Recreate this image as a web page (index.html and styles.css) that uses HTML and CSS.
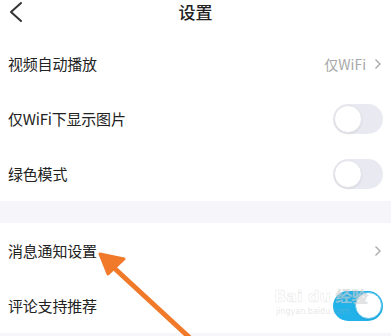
FILE: index.html
```html
<!DOCTYPE html>
<html lang="zh">
<head>
<meta charset="utf-8">
<link rel="stylesheet" href="styles.css">
</head>
<body>
<div class="page">
  <header class="topbar">
    <svg class="back" width="16" height="22" viewBox="0 0 16 22"><path d="M13 2 L3 11 L13 20" fill="none" stroke="#333" stroke-width="2" stroke-linecap="round" stroke-linejoin="round"/></svg>
    <div class="title">设置</div>
  </header>
  <section class="group">
    <div class="row"><span class="label">视频自动播放</span><span class="value">仅WiFi<svg class="chev" width="8" height="12" viewBox="0 0 8 12"><path d="M1.5 1.5 L6 6 L1.5 10.5" fill="none" stroke="#aaa" stroke-width="1.4"/></svg></span></div>
    <div class="row"><span class="label">仅WiFi下显示图片</span><span class="switch"><span class="knob"></span></span></div>
    <div class="row"><span class="label">绿色模式</span><span class="switch"><span class="knob"></span></span></div>
  </section>
  <div class="band"></div>
  <section class="group">
    <div class="row"><span class="label">消息通知设置</span><span class="value"><svg class="chev" width="8" height="12" viewBox="0 0 8 12"><path d="M1.5 1.5 L6 6 L1.5 10.5" fill="none" stroke="#aaa" stroke-width="1.4"/></svg></span></div>
    <div class="row"><span class="label">评论支持推荐</span><span class="switch on"><span class="knob"></span></span></div>
  </section>
  <div class="band bottom"></div>
  <div class="watermark"><span class="wm-big">Bai du 经验</span><span class="wm-small">jingyan.baidu.com</span></div>
  <svg class="arrow" width="391" height="336" viewBox="0 0 391 336"><defs><filter id="b"><feGaussianBlur stdDeviation="0.6"/></filter></defs><g filter="url(#b)"><path d="M190 338 L112 266" stroke="#f07a2a" stroke-width="5" stroke-linecap="round"/><path d="M100 254 L124 259 L108 274 Z" fill="#f07a2a" stroke="#f07a2a" stroke-width="3" stroke-linejoin="round"/></g></svg>
</div>
</body>
</html>
```
FILE: styles.css
```css
html, body { margin: 0; padding: 0; background: #fff; }
body { font-family: "Noto Sans CJK SC", "Noto Sans", sans-serif; color: #222; }
.page { position: relative; width: 391px; height: 336px; overflow: hidden; }
.topbar { height: 36px; position: relative; display: flex; align-items: flex-start; justify-content: center; }
.back { position: absolute; left: 8px; top: 1px; }
.title { font-size: 17px; line-height: 24px; font-weight: 500; color: #222; }
.group { display: flex; flex-direction: column; }
.row { height: 55px; display: flex; align-items: center; justify-content: space-between; padding: 0 9px 0 8px; }
.label { font-size: 15px; color: #222; letter-spacing: -0.2px; }
.value { display: flex; align-items: center; gap: 8px; font-size: 14px; color: #a8a8a8; font-family: "Noto Sans CJK SC", sans-serif; }
.chev { display: block; }
.switch { width: 50px; height: 30px; border-radius: 15px; background: #e9e9f2; position: relative; margin-right: -1px; }
.switch .knob { position: absolute; left: 1px; top: 1px; width: 26px; height: 26px; border-radius: 50%; background: #fff; border: 1px solid #e4e4ea; box-shadow: 0 1px 2px rgba(0,0,0,0.08); }
.switch.on { background: #22b2ea; }
.switch.on .knob { left: auto; right: 1px; border: 1.5px solid #5cc6ee; width: 25px; height: 25px; }
.band { height: 22px; background: #f5f5fa; }
.band.bottom { height: 10px; }
.watermark { position: absolute; left: 274px; top: 287px; display: flex; flex-direction: column; align-items: flex-start; pointer-events: none; }
.wm-big { font-family: "DejaVu Sans", sans-serif; font-size: 16px; font-weight: bold; color: rgba(255,255,255,0.5); -webkit-text-stroke: 0.5px rgba(150,150,150,0.3); line-height: 20px; }
.wm-small { font-family: "DejaVu Sans", sans-serif; font-size: 8px; color: rgba(170,170,170,0.3); line-height: 10px; margin-left: 2px; }
.arrow { position: absolute; left: 0; top: 0; pointer-events: none; }
```
